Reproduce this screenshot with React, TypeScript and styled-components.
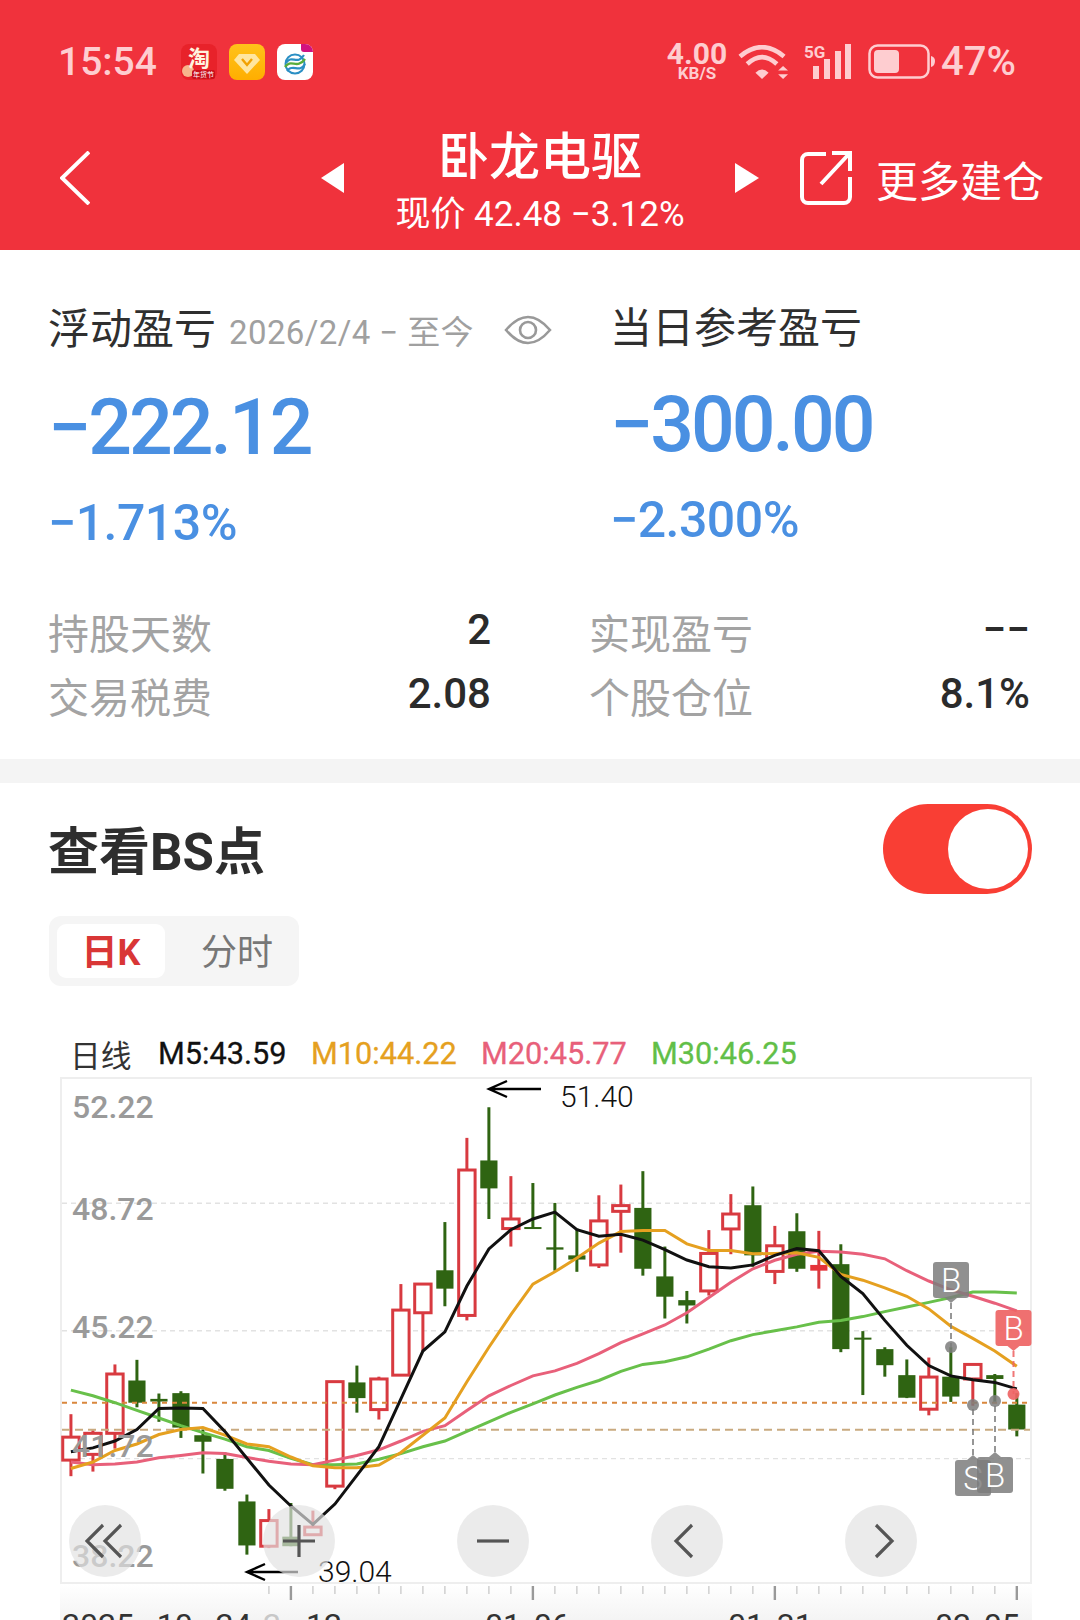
import React from "react";
import styled, { createGlobalStyle } from "styled-components";

const FONT = `Roboto, "Noto Sans CJK SC", "Noto Sans", sans-serif`;

const Global = createGlobalStyle`
  html, body { margin: 0; padding: 0; background: #fff; }
  body { font-family: ${FONT}; }
  #root { width: 1080px; height: 1620px; overflow: hidden; }
`;

const Page = styled.div`
  width: 1080px;
  height: 1620px;
  overflow: hidden;
  background: #fff;
  font-family: ${FONT};
`;

/* ---------- header ---------- */
const Header = styled.header`
  height: 250px;
  background: #f0323c;
`;
const StatusBar = styled.div`
  height: 118px;
  box-sizing: border-box;
  padding: 44px 63px 0 58px;
  display: flex;
  align-items: flex-start;
  color: #fecdd0;
`;
const Time = styled.span`
  font-size: 39px;
  line-height: 36px;
  font-weight: 500;
  margin-right: 24px;
`;
const AppIcons = styled.div`
  display: flex;
  gap: 12px;
`;
const StatusRight = styled.div`
  margin-left: auto;
  display: flex;
  align-items: center;
  height: 36px;
`;
const Speed = styled.div`
  width: 58px;
  margin-right: 12px;
  display: flex;
  flex-direction: column;
  align-items: center;
  font-weight: 700;
`;
const SpeedValue = styled.span`
  font-size: 30px;
  line-height: 22px;
`;
const SpeedUnit = styled.span`
  font-size: 17px;
  line-height: 15px;
  margin-top: 1px;
`;
const SmallGap = styled.span<{ $w: number }>`
  width: ${(p) => p.$w}px;
  flex: none;
`;
const Percent = styled.span`
  font-size: 40px;
  line-height: 36px;
  font-weight: 500;
  margin-left: 6px;
  width: 76px;
  white-space: nowrap;
`;
const NavRow = styled.div`
  height: 120px;
  padding-left: 60px;
  display: flex;
  align-items: center;
  color: #fff;
`;
const BackIcon = styled.svg`
  flex: none;
`;
const TitleBlock = styled.div`
  width: 340px;
  margin-left: 26px;
  align-self: stretch;
  box-sizing: border-box;
  padding-top: 12px;
  display: flex;
  flex-direction: column;
  align-items: center;
`;
const Title = styled.div`
  font-size: 51px;
  line-height: 56px;
  font-weight: 500;
`;
const SubTitle = styled.div`
  font-size: 35px;
  line-height: 42px;
  margin-top: 8px;
  white-space: nowrap;
`;
const Tri = styled.svg<{ $gap: number }>`
  margin-left: ${(p) => p.$gap}px;
  flex: none;
`;
const ShareWrap = styled.svg`
  margin-left: 41px;
  flex: none;
`;
const MoreLabel = styled.span`
  margin-left: 24px;
  font-size: 42px;
  white-space: nowrap;
  color: #fff;
`;

/* ---------- stats ---------- */
const Stats = styled.section`
  height: 509px;
  box-sizing: border-box;
  padding: 56px 48px 0;
`;
const TopGrid = styled.div`
  display: grid;
  grid-template-columns: 562px 1fr;
`;
const StatCol = styled.div`
  display: flex;
  flex-direction: column;
`;
const LabelRow = styled.div<{ $top?: number }>`
  display: flex;
  align-items: baseline;
  height: 48px;
  line-height: 48px;
  white-space: nowrap;
  margin-top: ${(p) => p.$top || 0}px;
`;
const StatLabel = styled.span`
  font-size: 42px;
  color: #2f2f2f;
`;
const DateRange = styled.span`
  font-size: 33px;
  color: #a0a0a0;
  margin-left: 13px;
  letter-spacing: 0.4px;
`;
const EyeIcon = styled.svg`
  margin-left: 30px;
  align-self: center;
  flex: none;
`;
const BigValue = styled.div<{ $mt?: number }>`
  margin-top: ${(p) => p.$mt ?? 34}px;
  font-size: 77px;
  line-height: 80px;
  font-weight: 500;
  color: #4a90e2;
  letter-spacing: -3px;
`;
const PctValue = styled.div`
  margin-top: 26px;
  font-size: 50px;
  line-height: 58px;
  font-weight: 500;
  color: #4a90e2;
  letter-spacing: -0.5px;
`;
const DetailGrid = styled.div`
  margin-top: 47px;
  display: grid;
  grid-template-columns: 443px 441px;
  column-gap: 98px;
  grid-auto-rows: 64px;
`;
const DetailRow = styled.div`
  display: flex;
  justify-content: space-between;
  align-items: center;
`;
const DetailLabel = styled.span`
  font-size: 41px;
  color: #a3a3a3;
`;
const DetailValue = styled.span`
  font-size: 42px;
  font-weight: 500;
  color: #2b2b2b;
  transform: translateY(-2px);
`;
const Band = styled.div`
  height: 24px;
  background: #f4f4f4;
`;

/* ---------- BS section ---------- */
const BSHead = styled.div`
  height: 133px;
  box-sizing: border-box;
  padding: 21px 48px 0 48px;
  display: flex;
  justify-content: space-between;
  align-items: flex-start;
`;
const BSTitle = styled.h2`
  margin: 21px 0 0;
  font-size: 51px;
  line-height: 56px;
  font-weight: 700;
  color: #2e2e2e;
`;
const Toggle = styled.div`
  width: 149px;
  height: 90px;
  box-sizing: border-box;
  padding: 5px 4px;
  border-radius: 45px;
  background: #f93e34;
  display: flex;
  justify-content: flex-end;
`;
const Knob = styled.div`
  width: 80px;
  height: 80px;
  border-radius: 50%;
  background: #fff;
`;
const Tabs = styled.div`
  margin-left: 49px;
  width: 250px;
  height: 70px;
  box-sizing: border-box;
  padding: 8px;
  border-radius: 12px;
  background: #f5f5f5;
  display: flex;
`;
const Tab = styled.div<{ $active?: boolean }>`
  width: ${(p) => (p.$active ? 108 : 126)}px;
  height: 54px;
  line-height: 58px;
  box-sizing: border-box;
  padding-left: ${(p) => (p.$active ? 0 : 18)}px;
  text-align: center;
  border-radius: 9px;
  background: ${(p) => (p.$active ? "#fff" : "transparent")};
  color: ${(p) => (p.$active ? "#d93636" : "#777")};
  font-size: 36px;
  font-weight: ${(p) => (p.$active ? 700 : 400)};
`;
const Legend = styled.div`
  margin: 44px 0 0 70px;
  height: 46px;
  margin-bottom: 1px;
  display: flex;
  align-items: center;
  font-size: 30.7px;
  white-space: nowrap;
`;
const LegendName = styled.span`
  color: #333;
  width: 88px;
`;
const LegendItem = styled.span<{ $color: string; $w: number }>`
  color: ${(p) => p.$color};
  width: ${(p) => p.$w}px;
  font-weight: 400;
  -webkit-text-stroke: 0.3px ${(p) => p.$color};
`;
const Frame = styled.div`
  position: relative;
  margin: 0 0 0 60px;
  width: 972px;
  height: 507px;
  box-sizing: border-box;
  border: 2px solid #eee;
`;
const ChartSvg = styled.svg`
  display: block;
  width: 968px;
  height: 503px;
  overflow: visible;
`;
const ControlRow = styled.div`
  position: absolute;
  left: 7px;
  top: 426px;
  display: flex;
  gap: 122px;
`;
const RoundBtn = styled.div`
  width: 72px;
  height: 72px;
  border-radius: 50%;
  background: rgba(226, 226, 226, 0.68);
  display: flex;
  align-items: center;
  justify-content: center;
`;
const AxisStrip = styled.svg`
  display: block;
  margin-left: 60px;
  width: 972px;
  height: 36px;
  background: linear-gradient(180deg, #fff 0%, #f4f4f4 100%);
`;

/* ---------- chart data (measured against the reference) ---------- */
type C = [number, number, number, number, "r" | "g" | "f"];
const candles: C[] = [
  [1030, 1192, 1090, 1150, "r"], [1072, 1180, 1080, 1135, "r"], [900, 1120, 925, 1080, "r"],
  [888, 1012, 942, 1000, "g"], [976, 1050, 990, 997, "g"], [970, 1092, 975, 1065, "g"],
  [1070, 1185, 1085, 1102, "g"], [1130, 1230, 1147, 1225, "g"], [1240, 1397, 1258, 1373, "g"],
  [1278, 1380, 1308, 1375, "r"], [1262, 1375, 1350, 1375, "g"], [1282, 1345, 1325, 1345, "r"],
  [945, 1226, 945, 1218, "r"], [903, 1026, 947, 988, "g"], [932, 1044, 938, 1018, "r"],
  [690, 930, 758, 928, "r"], [690, 865, 690, 765, "r"], [528, 748, 654, 702, "g"],
  [308, 785, 392, 772, "r"], [228, 520, 367, 440, "g"], [408, 592, 520, 545, "r"],
  [426, 545, 541, 546, "g"], [478, 655, 594, 600, "g"], [545, 658, 615, 626, "g"],
  [458, 648, 525, 640, "r"], [430, 608, 485, 500, "r"], [395, 668, 491, 650, "g"],
  [592, 780, 670, 723, "g"], [708, 793, 732, 746, "g"], [549, 720, 610, 708, "r"],
  [455, 612, 507, 546, "r"], [435, 645, 484, 615, "g"], [538, 690, 590, 657, "r"],
  [505, 658, 552, 650, "g"], [551, 702, 640, 655, "f"], [586, 868, 638, 860, "g"],
  [813, 980, 830, 835, "g"], [855, 932, 860, 902, "g"], [887, 988, 928, 987, "g"],
  [882, 1033, 933, 1017, "r"], [855, 998, 932, 984, "g"], [900, 1008, 900, 938, "r"],
  [925, 1000, 928, 938, "g"], [975, 1088, 1005, 1070, "g"],
];
const ma5 = [1128,1118,1100,1070,1015,1014,1015,1075,1145,1215,1270,1318,1265,1190,1115,990,865,815,695,598,548,520,502,548,565,560,575,600,627,645,648,640,615,597,603,670,715,785,850,903,930,940,947,964];
const ma10 = [1172,1155,1125,1108,1083,1070,1065,1085,1108,1115,1142,1165,1170,1170,1163,1130,1085,1040,945,855,770,690,658,622,583,553,550,550,585,602,602,611,610,608,620,665,680,700,722,755,800,832,865,905];
const ma20 = [1155,1162,1160,1155,1144,1138,1131,1133,1143,1153,1160,1162,1150,1138,1123,1100,1075,1060,1020,982,955,930,917,897,872,843,820,797,765,725,685,650,628,612,604,606,612,624,655,682,705,722,740,760];
const ma30 = [967,982,1000,1020,1040,1060,1078,1095,1115,1125,1145,1162,1162,1160,1148,1133,1115,1100,1075,1050,1025,1003,980,960,942,918,900,893,880,860,838,822,812,802,790,785,775,762,750,738,725,711,711,713];

const PX = 62; // page x of svg origin
const PY = 1079; // page y of svg origin
const cx = (i: number) => (206 + 63.88 * i) / 2.904 - PX;
const Y = (z: number) => z / 2.613 + 1020 - PY;
const pts = (a: number[]) => a.map((v, i) => `${cx(i).toFixed(1)},${Y(v).toFixed(1)}`).join(" ");

const GREEN = "#2f6412";
const RED = "#d83a40";

const Candle = ({ c, i }: { c: C; i: number }) => {
  const [wt, wb, bt, bb, kind] = c;
  const x = cx(i);
  const col = kind === "g" ? GREEN : RED;
  const h = Math.max(Y(bb) - Y(bt), 2);
  return (
    <g>
      <line x1={x} x2={x} y1={Y(wt)} y2={Y(wb)} stroke={col} strokeWidth={3} />
      {kind === "r" ? (
        <rect x={x - 8.2} y={Y(bt)} width={16.4} height={h} fill="#fff" stroke={col} strokeWidth={3} />
      ) : (
        <rect x={x - 8.6} y={Y(bt)} width={17.2} height={h} fill={kind === "f" ? "#e5333a" : col} />
      )}
    </g>
  );
};

const Tag = ({ x, y, label, fill, up, dotY }: { x: number; y: number; label: string; fill: string; up?: boolean; dotY: number }) => {
  const l = x - PX;
  const t = y - PY;
  const mid = l + 18;
  const dy = dotY - PY;
  const tipY = up ? t - 5 : t + 41;
  const base = up ? t : t + 36;
  return (
    <g>
      <line x1={mid} x2={mid} y1={tipY} y2={dy} stroke={fill} strokeOpacity={0.95} strokeWidth={2} strokeDasharray="6 4" />
      <circle cx={mid} cy={dy} r={6} fill={fill} />
      <polygon points={`${mid - 6},${base} ${mid + 6},${base} ${mid},${tipY}`} fill={fill} />
      <rect x={l} y={t} width={36} height={36} rx={3} fill={fill} />
      <text x={mid} y={t + 30} textAnchor="middle" fontSize={33} fontWeight={300} fontFamily="Roboto, sans-serif" fill="#fff">{label}</text>
    </g>
  );
};

const YLabel = ({ y, children }: { y: number; children: string }) => (
  <text x={72 - PX} y={y - PY} fontSize={32} fontWeight={500} fill="#9a9a9a" fontFamily="Roboto, sans-serif">{children}</text>
);

const Arrow = ({ x, y, w }: { x: number; y: number; w: number }) => (
  <path d={`M${x - PX + 18} ${y - PY - 8} L${x - PX} ${y - PY} L${x - PX + 18} ${y - PY + 8} M${x - PX} ${y - PY} H${x - PX + w}`} fill="none" stroke="#000" strokeWidth={2.4} />
);

const Chart = () => (
  <ChartSvg viewBox="0 0 968 503">
    {[479, 812, 1146].map((z) => (
      <line key={z} x1={0} x2={968} y1={Y(z)} y2={Y(z)} stroke="#e2e2e2" strokeWidth={1.4} strokeDasharray="5 4" />
    ))}
    {candles.map((c, i) => <Candle key={i} c={c} i={i} />)}
    <line x1={0} x2={968} y1={Y(1000)} y2={Y(1000)} stroke="#d9873c" strokeWidth={2} strokeDasharray="5 5" />
    <line x1={0} x2={968} y1={Y(1071)} y2={Y(1071)} stroke="#c9aa80" strokeWidth={2} strokeDasharray="8 5" />
    <polyline points={pts(ma30)} fill="none" stroke="#68c04a" strokeWidth={3} />
    <polyline points={pts(ma20)} fill="none" stroke="#e8607a" strokeWidth={3} />
    <polyline points={pts(ma10)} fill="none" stroke="#e5a020" strokeWidth={3} />
    <polyline points={pts(ma5)} fill="none" stroke="#111" strokeWidth={3} />
    <YLabel y={1118}>52.22</YLabel>
    <YLabel y={1220}>48.72</YLabel>
    <YLabel y={1338}>45.22</YLabel>
    <YLabel y={1457}>41.72</YLabel>
    <YLabel y={1567}>38.22</YLabel>
    <Arrow x={489} y={1089} w={52} />
    <text x={560 - PX} y={1107 - PY} fontSize={30} fontWeight={300} fill="#111" fontFamily="Roboto, sans-serif">51.40</text>
    <Arrow x={247} y={1572} w={51} />
    <text x={318 - PX} y={1582 - PY} fontSize={30} fontWeight={300} fill="#111" fontFamily="Roboto, sans-serif">39.04</text>
    <Tag x={933} y={1262} label="B" fill="rgba(125,125,125,0.85)" dotY={1347} />
    <Tag x={995.5} y={1310} label="B" fill="rgba(238,100,100,0.92)" dotY={1394} />
    <Tag x={955} y={1460} label="S" fill="rgba(125,125,125,0.85)" up dotY={1405} />
    <Tag x={977} y={1457} label="B" fill="rgba(125,125,125,0.85)" up dotY={1401} />
  </ChartSvg>
);

const ctl = { width: 40, height: 40, viewBox: "0 0 40 40", fill: "none", stroke: "#555", strokeWidth: 3.2 };
const Controls = () => (
  <ControlRow>
    <RoundBtn><svg {...ctl}><path d="M18 4 L2 20 L18 36 M36 4 L20 20 L36 36" /></svg></RoundBtn>
    <RoundBtn><svg {...ctl}><path d="M20 4 V36 M4 20 H36" /></svg></RoundBtn>
    <RoundBtn><svg {...ctl}><path d="M4 20 H36" /></svg></RoundBtn>
    <RoundBtn><svg {...ctl}><path d="M25 4 L9 20 L25 36" /></svg></RoundBtn>
    <RoundBtn><svg {...ctl}><path d="M15 4 L31 20 L15 36" /></svg></RoundBtn>
  </ControlRow>
);

const Axis = () => (
  <AxisStrip viewBox="0 0 972 36">
    {candles.map((_, i) => {
      if (i < 9) return null;
      const x = cx(i) + 2;
      const big = i === 10 || i === 21 || i === 32 || i === 43;
      return <line key={i} x1={x} x2={x} y1={2} y2={big ? 16 : 10} stroke={big ? "#999" : "#ccc"} strokeWidth={big ? 2.4 : 1.4} />;
    })}
    <g fontSize={32} fill="#333" fontFamily="Roboto, sans-serif">
      <text x={2} y={52}>2025<tspan dx={7}>-</tspan><tspan dx={7}>10</tspan><tspan dx={7}>-</tspan><tspan dx={7}>24</tspan></text>
      <text x={203} y={52} fill="#c8c8c8">2</text>
      <text x={246} y={52}>12</text>
      <text x={425} y={52}>01<tspan dx={2}>-</tspan><tspan dx={2}>06</tspan></text>
      <text x={668} y={52}>01<tspan dx={2}>-</tspan><tspan dx={2}>31</tspan></text>
      <text x={875} y={52}>02<tspan dx={2}>-</tspan><tspan dx={2}>05</tspan></text>
    </g>
  </AxisStrip>
);

/* ---------- status icons ---------- */
const TaobaoIcon = () => (
  <svg width={36} height={36} viewBox="0 0 36 36">
    <rect width={36} height={36} rx={8} fill="#e8222a" />
    <circle cx={7} cy={27} r={6} fill="#f7b58c" />
    <rect x={11} y={26} width={23} height={9} rx={2} fill="#c90f1b" />
    <text x={18} y={22} textAnchor="middle" fontSize={22} fontWeight={700} fill="#fff3df" fontFamily={`"Noto Sans CJK SC", sans-serif`}>淘</text>
    <text x={22.5} y={33} textAnchor="middle" fontSize={7} fill="#fff" fontFamily={`"Noto Sans CJK SC", sans-serif`}>年货节</text>
  </svg>
);
const VipIcon = () => (
  <svg width={36} height={36} viewBox="0 0 36 36">
    <defs>
      <linearGradient id="vipg" x1="0" y1="0" x2="0" y2="1">
        <stop offset="0" stopColor="#ffc21a" />
        <stop offset="1" stopColor="#ffae00" />
      </linearGradient>
    </defs>
    <rect width={36} height={36} rx={8} fill="url(#vipg)" />
    <path d="M10 10 H26 L31 16 L18 30 L5 16 Z" fill="#ffe6a0" />
    <path d="M13 15 L18 21 L23 15" fill="none" stroke="#f2a100" strokeWidth={2.4} />
  </svg>
);
const MobileIcon = () => (
  <svg width={36} height={36} viewBox="0 0 36 36">
    <rect width={36} height={36} rx={8} fill="#fff" />
    <path d="M24 0 H28 A8 8 0 0 1 36 8 H27 A3 3 0 0 1 24 5 Z" fill="#d1127f" />
    <circle cx={18} cy={20} r={9.5} fill="none" stroke="#2b8fc4" strokeWidth={2} />
    <path d="M8 23 C14 14 20 26 28 15" fill="none" stroke="#58ad3c" strokeWidth={2.4} />
    <path d="M9 19 C15 10 20 22 27 11" fill="none" stroke="#2b8fc4" strokeWidth={2.2} />
    <path d="M10 27 C16 19 22 30 28 20" fill="none" stroke="#2b8fc4" strokeWidth={2.2} />
  </svg>
);
const WifiIcon = () => (
  <svg width={51} height={35} viewBox="232 40 155 105" fill="none" stroke="#fecdd0">
    <path d="M238 74 Q305 18 372 74" strokeWidth={14} />
    <path d="M260 97 Q305 55 350 97" strokeWidth={14} />
    <path d="M285 124 Q305 104 325 124 L305 143 Z" fill="#fecdd0" stroke="none" />
    <path d="M369 103 L384 117 H354 Z M354 128 H384 L369 143 Z" fill="#fecdd0" stroke="none" />
  </svg>
);
const SignalIcon = () => (
  <svg width={47} height={36} viewBox="0 0 47 36" fill="#fecdd0">
    <text x={0} y={14} fontSize={17} fontWeight={700} fontFamily="Roboto, sans-serif">5G</text>
    <rect x={9} y={22} width={6} height={13} />
    <rect x={20} y={15} width={6} height={20} />
    <rect x={31} y={7} width={6} height={28} />
    <rect x={41} y={0} width={6} height={35} />
  </svg>
);
const BatteryIcon = () => (
  <svg width={67} height={36} viewBox="0 0 67 36" fill="none">
    <rect x={1.5} y={1.5} width={59} height={32} rx={8} stroke="#fecdd0" strokeWidth={2.5} />
    <rect x={6} y={6} width={25} height={23} rx={4} fill="#fecdd0" />
    <path d="M63 12 Q67 13 67 17 Q67 22 63 23 Z" fill="#fecdd0" />
  </svg>
);

export default function App() {
  return (
    <Page>
      <Global />
      <Header>
        <StatusBar>
          <Time>15:54</Time>
          <AppIcons>
            <TaobaoIcon />
            <VipIcon />
            <MobileIcon />
          </AppIcons>
          <StatusRight>
            <Speed>
              <SpeedValue>4.00</SpeedValue>
              <SpeedUnit>KB/S</SpeedUnit>
            </Speed>
            <WifiIcon />
            <SmallGap $w={15} />
            <SignalIcon />
            <SmallGap $w={17} />
            <BatteryIcon />
            <Percent>47%</Percent>
          </StatusRight>
        </StatusBar>
        <NavRow>
          <BackIcon width={30} height={54} viewBox="0 0 30 54" fill="none" stroke="#fff" strokeWidth={4}>
            <path d="M29 1 L2 27 L29 53" />
          </BackIcon>
          <Tri $gap={231} width={23} height={30} viewBox="0 0 23 30"><path d="M23 0 V30 L0 15 Z" fill="#fff" /></Tri>
          <TitleBlock>
            <Title>卧龙电驱</Title>
            <SubTitle>现价 42.48 −3.12%</SubTitle>
          </TitleBlock>
          <Tri $gap={25} width={24} height={30} viewBox="0 0 24 30"><path d="M0 0 V30 L24 15 Z" fill="#fff" /></Tri>
          <ShareWrap width={52} height={54} viewBox="0 0 52 54" fill="none" stroke="#fff" strokeWidth={4}>
            <path d="M26 3 H8 A6 6 0 0 0 2 9 V46 A6 6 0 0 0 8 52 H44 A6 6 0 0 0 50 46 V26" />
            <path d="M21 33 L48 4 M32 2 H50 V20" />
          </ShareWrap>
          <MoreLabel>更多建仓</MoreLabel>
        </NavRow>
      </Header>

      <Stats>
        <TopGrid>
          <StatCol>
            <LabelRow>
              <StatLabel>浮动盈亏</StatLabel>
              <DateRange>2026/2/4 − 至今</DateRange>
              <EyeIcon width={48} height={36} viewBox="0 0 48 36" fill="none" stroke="#999" strokeWidth={2.6}>
                <path d="M2 18 Q24 -8 46 18 Q24 44 2 18 Z" />
                <circle cx={24} cy={18} r={8} />
              </EyeIcon>
            </LabelRow>
            <BigValue>−222.12</BigValue>
            <PctValue>−1.713%</PctValue>
          </StatCol>
          <StatCol>
            <LabelRow $top={-1}><StatLabel>当日参考盈亏</StatLabel></LabelRow>
            <BigValue $mt={32}>−300.00</BigValue>
            <PctValue>−2.300%</PctValue>
          </StatCol>
        </TopGrid>
        <DetailGrid>
          <DetailRow><DetailLabel>持股天数</DetailLabel><DetailValue>2</DetailValue></DetailRow>
          <DetailRow><DetailLabel>实现盈亏</DetailLabel><DetailValue>−−</DetailValue></DetailRow>
          <DetailRow><DetailLabel>交易税费</DetailLabel><DetailValue>2.08</DetailValue></DetailRow>
          <DetailRow><DetailLabel>个股仓位</DetailLabel><DetailValue>8.1%</DetailValue></DetailRow>
        </DetailGrid>
      </Stats>
      <Band />

      <BSHead>
        <BSTitle>查看BS点</BSTitle>
        <Toggle><Knob /></Toggle>
      </BSHead>
      <Tabs>
        <Tab $active>日K</Tab>
        <Tab>分时</Tab>
      </Tabs>
      <Legend>
        <LegendName>日线</LegendName>
        <LegendItem $color="#111" $w={153}>M5:43.59</LegendItem>
        <LegendItem $color="#e5a020" $w={170}>M10:44.22</LegendItem>
        <LegendItem $color="#e8607a" $w={170}>M20:45.77</LegendItem>
        <LegendItem $color="#62bf48" $w={150}>M30:46.25</LegendItem>
      </Legend>
      <Frame>
        <Chart />
        <Controls />
      </Frame>
      <Axis />
    </Page>
  );
}
